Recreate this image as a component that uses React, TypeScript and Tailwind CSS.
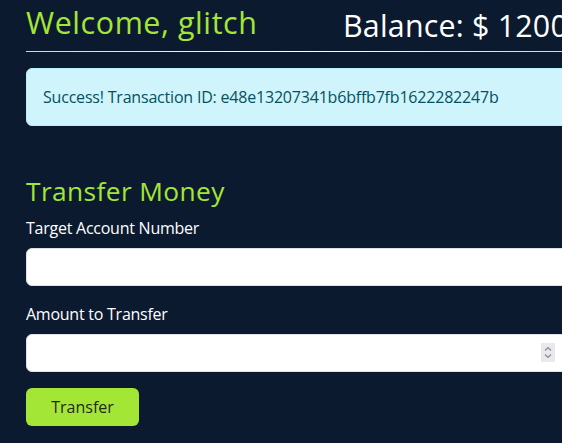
export default function App() {
  return (
    <div
      className="h-[443px] w-full overflow-hidden bg-[#0c1a2f] text-white"
      style={{ fontFamily: '"Open Sans", "Noto Sans", sans-serif' }}
    >
      <div className="w-[594px] px-[26px] pt-[5px]">
        {/* Header */}
        <div className="flex items-start justify-between">
          <h1 className="text-[30.4px] leading-[1.2] tracking-[0.6px] text-[#a3e635]">Welcome, glitch</h1>
          <h2 className="mt-[3px] text-[30.4px] leading-[1.2] tracking-[0.2px] text-white">Balance: $ 1200</h2>
        </div>
        <div className="mt-[6.5px] h-px bg-gradient-to-r from-[#c6f06a] via-white to-[#c6f06a]" />

        {/* Alert */}
        <div className="mt-[16px] rounded-md border border-[#b6effb] bg-[#cff4fc] p-4 text-[16px] leading-6 tracking-[-0.2px] text-[#055160]">
          Success! Transaction ID: e48e13207341b6bffb7fb1622282247b
        </div>

        {/* Transfer form */}
        <h2 className="mt-[50px] mb-2 text-[26.3px] leading-[1.2] tracking-[0.4px] text-[#a3e635]">Transfer Money</h2>
        <form onSubmit={(e) => e.preventDefault()}>
          <div className="mb-4">
            <label className="mb-2 block text-[16px] leading-6 tracking-[-0.25px] text-white">Target Account Number</label>
            <input
              type="text"
              className="block h-[38px] w-full rounded-md border border-[#dee2e6] bg-white px-3 text-[16px] text-[#212529] outline-none"
            />
          </div>
          <div className="mb-4">
            <label className="mb-2 block text-[16px] leading-6 tracking-[-0.25px] text-white">Amount to Transfer</label>
            <div className="relative">
              <input
                type="text"
                className="block h-[38px] w-full rounded-md border border-[#dee2e6] bg-white px-3 text-[16px] text-[#212529] outline-none"
              />
              {/* number spinner */}
              <div className="absolute right-[13px] top-[9px] flex h-[19px] w-[14px] flex-col items-center justify-center bg-[#e9e9ed]">
                <svg width="8" height="15" viewBox="0 0 8 15" fill="none" stroke="#8a8a8f" strokeWidth="1.2">
                  <path d="M1 5.5 L4 2.5 L7 5.5" />
                  <path d="M1 9.5 L4 12.5 L7 9.5" />
                </svg>
              </div>
            </div>
          </div>
          <button
            type="submit"
            className="h-[38px] w-[113px] rounded-md bg-[#a3e635] text-[16px] leading-6 text-[#1f2a1a]"
          >
            Transfer
          </button>
        </form>
      </div>
    </div>
  );
}
